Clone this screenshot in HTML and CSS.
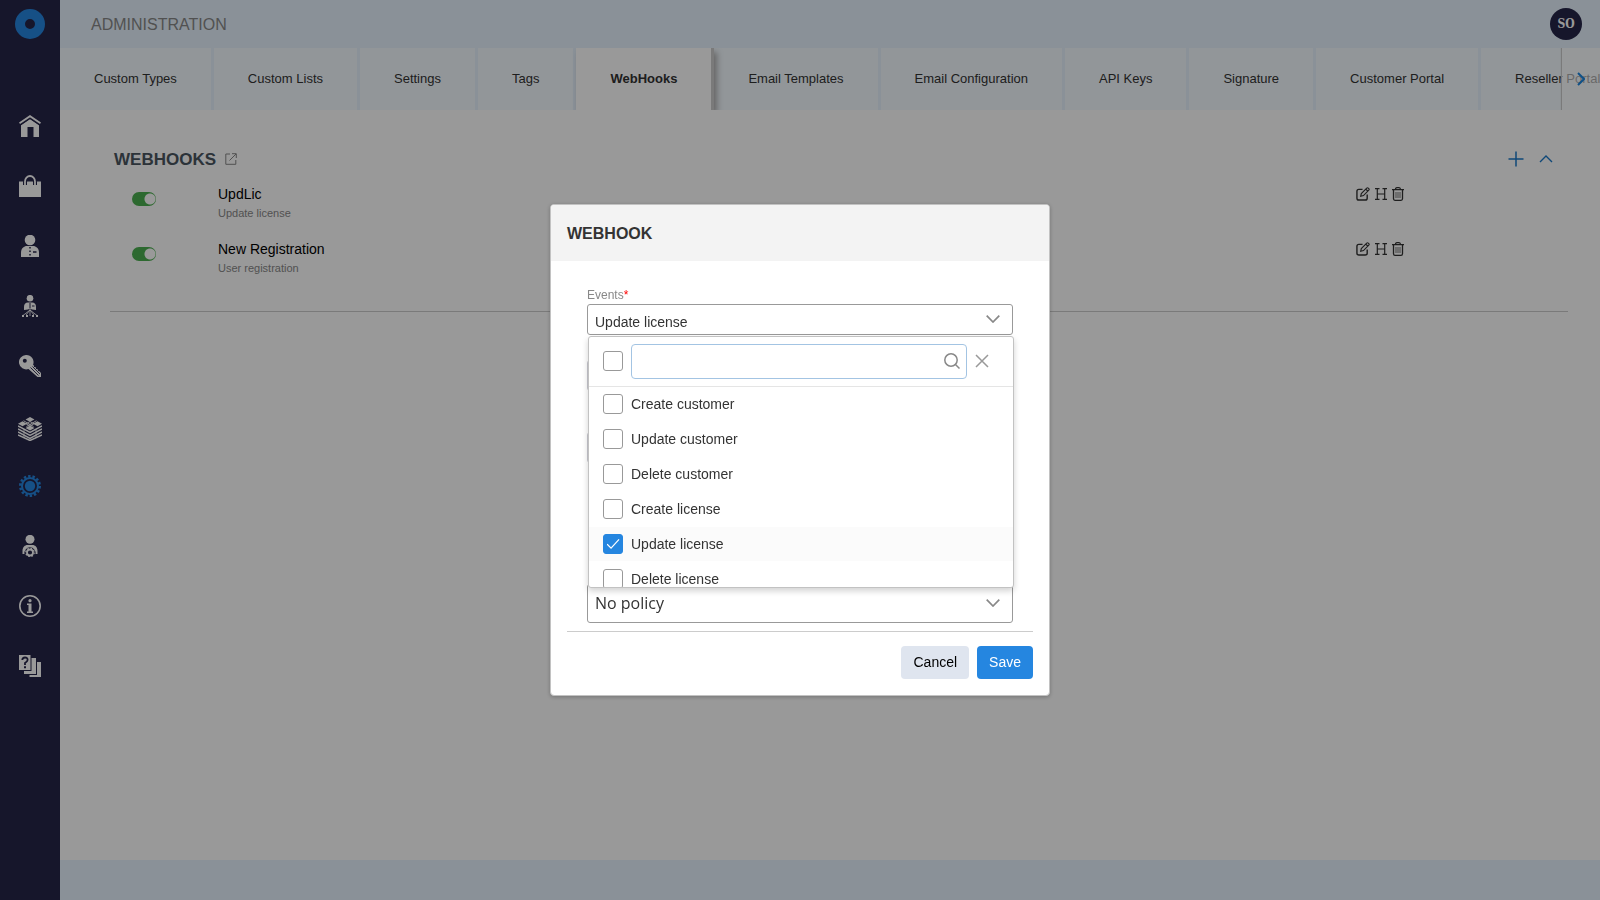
FILE: index.html
```html
<!DOCTYPE html>
<html lang="en">
<head>
<meta charset="utf-8">
<title>Administration</title>
<link rel="stylesheet" href="styles.css">
</head>
<body>
<div class="app">
  <aside class="sidebar">
    <a class="brand" href="#" aria-label="Start">
      <svg width="30" height="30" viewBox="0 0 30 30"><circle cx="15" cy="15" r="10" fill="none" stroke="#2586e0" stroke-width="10"/></svg>
    </a>
    <nav class="menu">
      <a href="#" aria-label="Home"><svg viewBox="0 0 22 22"><path d="M2 10 11 4l9 6v12h-5.500V12h-6v10H2z" fill="currentColor"/><path d="M.5 8.800 11 1.500l10.500 7.300" fill="none" stroke="#262549" stroke-width="4"/><path d="M.5 8.300 11 1.200l10.500 7.100" fill="none" stroke="currentColor" stroke-width="1.800"/></svg></a>
      <a href="#" aria-label="Products"><svg viewBox="0 0 22 22"><path d="M0 6.500h22V22H0z" fill="currentColor"/><path d="M6 10V7a5 5.500 0 0 1 10 0v3" fill="none" stroke="#262549" stroke-width="4"/><path d="M6 10V6.500a5 5.500 0 0 1 10 0V10" fill="none" stroke="currentColor" stroke-width="1.800"/></svg></a>
      <a href="#" aria-label="Customers"><svg viewBox="0 0 22 22"><circle cx="11" cy="5" r="5.300" fill="currentColor"/><path d="M2 22v-4c0-5 3-7 6-7h6c3 0 6 2 6 7v4z" fill="currentColor"/><path d="M11 12v10" stroke="#262549" stroke-width="1.500" stroke-dasharray="1.500 2"/><path d="M14 17h3.500" stroke="#262549" stroke-width="1.500"/></svg></a>
      <a href="#" aria-label="Resellers"><svg viewBox="0 0 22 22"><circle cx="11" cy="3.200" r="3.300" fill="currentColor"/><path d="M5 15v-3q0-4.500 4-4.500h4q4 0 4 4.500v3l-4-.5-2-1-2 1z" fill="currentColor"/><path d="M11 8v5M13 11h2.500" stroke="#262549"/><path d="M11 14v7M11 15l-4 5M11 15l4 5M11 15l-7 5.500M11 15l7 5.500" stroke="currentColor" stroke-width=".8"/><path d="M3 20h2v2H3zM7 20h2v2H7zM13 20h2v2h-2zM17 20h2v2h-2z" fill="currentColor"/></svg></a>
      <a href="#" aria-label="Licenses"><svg viewBox="0 0 22 22"><path fill="currentColor" fill-rule="evenodd" d="M7.300 0a7.200 7.200 0 0 1 6.800 9.700L22 18v4h-3.500l-9-8A7.200 7.200 0 1 1 7.300 0zM5.800 3.800a2 2 0 1 0 0 4 2 2 0 0 0 0-4z"/><path d="m11.500 12.500 8 8M13.500 11.500l7.500 7.500" stroke="#262549" stroke-width=".9"/><path d="m16 11-1 1m3 1-1 1m3 1-1 1" stroke="#262549"/></svg></a>
      <a href="#" aria-label="Bundles" class="low"><svg class="wide" viewBox="0 0 24 24"><path d="m12 0 4.500 2.400L12 4.800 7.500 2.400zM4.500 4.200 9 6.800 4.500 9.300 0 6.800zM19.500 4.200 24 6.800l-4.500 2.500L15 6.800zM12 8.500l4.500 2.500-4.500 2.500L7.500 11z" fill="currentColor"/><path d="m5.500 3.700 10 5.800M18.500 3.700l-10 5.800M8 6.800l4-2.300 4 2.300-4 2.300z" fill="none" stroke="currentColor" stroke-width=".9"/><path d="m0 9 12 6.300L24 9M0 12l12 6.300L24 12M0 15l12 6.300L24 15M0 18l12 5.500L24 18" fill="none" stroke="currentColor" stroke-width="1.500"/><path d="M6 12v9M18 12v9" stroke="currentColor" stroke-width="1.200" opacity=".6"/></svg></a>
      <a href="#" aria-label="Administration" class="current"><svg viewBox="0 0 22 22"><circle cx="11" cy="11" r="9.700" fill="none" stroke="currentColor" stroke-width="2.600" stroke-dasharray="2.400 1.953"/><circle cx="11" cy="11" r="8" fill="none" stroke="currentColor" stroke-width="2"/><circle cx="11" cy="11" r="5.200" fill="currentColor"/></svg></a>
      <a href="#" aria-label="Users"><svg viewBox="0 0 22 22"><circle cx="11" cy="4.300" r="4.500" fill="currentColor"/><path d="M3.500 19v-3c0-4 2.500-6 5-6h5c2.500 0 5 2 5 6v3h-2a5.600 5.600 0 1 0-11 0z" fill="currentColor"/><circle cx="11" cy="17.500" r="3" fill="none" stroke="currentColor" stroke-width="1.800"/><circle cx="11" cy="17.500" r="4.200" fill="none" stroke="currentColor" stroke-width="1.200" stroke-dasharray="1.600 1.700"/></svg></a>
      <a href="#" aria-label="Info"><svg viewBox="0 0 22 22"><circle cx="11" cy="11" r="10.200" fill="none" stroke="currentColor" stroke-width="1.600"/><circle cx="11" cy="5.700" r="1.600" fill="currentColor"/><path d="M8 8.500h4.500v8H14V18H8v-1.500h1.500V10H8z" fill="currentColor"/></svg></a>
      <a href="#" aria-label="Help"><svg viewBox="0 0 22 22"><path d="M0 0h11.500v15H0zM12.500 3H17v16H5v-3h7.500zM18 7h4v15H10.500v-2H18z" fill="currentColor"/><path d="M3.300 5q0-2.500 2.700-2.500T8.600 5Q8.600 6.300 6 8v2" fill="none" stroke="#262549" stroke-width="1.800"/><path d="M5 11.300h2v2H5z" fill="#262549"/></svg></a>
    </nav>
  </aside>

  <div class="page">
    <header class="topbar">
      <h1>ADMINISTRATION</h1>
      <button class="avatar" type="button">SO</button>
    </header>
    <div class="tabs-wrap">
      <nav class="tabs">
        <a href="#">Custom Types</a>
        <a href="#">Custom Lists</a>
        <a href="#">Settings</a>
        <a href="#">Tags</a>
        <a href="#" class="active">WebHooks</a>
        <a href="#">Email Templates</a>
        <a href="#">Email Configuration</a>
        <a href="#">API Keys</a>
        <a href="#">Signature</a>
        <a href="#">Customer Portal</a>
        <a href="#">Reseller Portal</a>
      </nav>
      <button class="tabs-next" type="button" aria-label="Next tabs"><svg width="8" height="14" viewBox="0 0 8 14"><path d="m1 1 6 6-6 6" fill="none" stroke="currentColor" stroke-width="2"/></svg></button>
    </div>
    <main class="content">
      <section class="panel">
        <div class="panel-head">
          <h2>WEBHOOKS</h2>
          <a href="#" class="ext" aria-label="Open documentation"><svg width="12" height="12" viewBox="0 0 12 12"><path d="M5 1H.8v10.300h10V7M7 .7h4.300V5M11 1 4.500 7.500" fill="none" stroke="currentColor"/></svg></a>
          <div class="head-actions">
            <button type="button" aria-label="Add"><svg width="16" height="16" viewBox="0 0 16 16"><path d="M8 .5v15M.5 8h15" stroke="currentColor" stroke-width="1.500"/></svg></button>
            <button type="button" aria-label="Collapse"><svg width="14" height="8" viewBox="0 0 14 8"><path d="m1 7 6-6 6 6" fill="none" stroke="currentColor" stroke-width="1.400"/></svg></button>
          </div>
        </div>
        <div class="hook">
          <input class="switch" type="checkbox" checked aria-label="UpdLic">
          <div class="hook-text"><h3>UpdLic</h3><p>Update license</p></div>
          <div class="hook-actions">
            <button type="button" aria-label="Edit"><svg width="14" height="14" viewBox="0 0 15 15"><path d="M7 2.500H3Q1 2.500 1 4.500V12q0 2 2 2h7q2 0 2-2V8" fill="none" stroke="currentColor" stroke-width="1.500"/><path d="m5 10 .7-3L11.500 1.200q.8-.8 1.600 0l.6.6q.8.800 0 1.600L8 9.200zM10.500 2.300l2 2" fill="none" stroke="currentColor" stroke-width="1.200"/></svg></button>
            <button type="button" aria-label="History"><svg width="12" height="12" viewBox="0 0 12 12"><path d="M0 .6h4.500M7.500.6H12M0 11.400h4.500M7.500 11.400H12M2.300.6v10.800M9.700.6v10.800M2.300 6h7.400" fill="none" stroke="currentColor" stroke-width="1.200"/></svg></button>
            <button type="button" aria-label="Delete"><svg width="12" height="14" viewBox="0 0 12 14"><path d="M0 2.700h12M3.500 2.700Q3.500.7 5 .7h2q1.500 0 1.500 2M1.500 3v8.800q0 1.500 1.500 1.500h6q1.500 0 1.500-1.500V3" fill="none" stroke="currentColor" stroke-width="1.300"/><path d="M4 5v6M6 5v6M8 5v6" stroke="currentColor" stroke-width=".7"/></svg></button>
          </div>
        </div>
        <div class="hook">
          <input class="switch" type="checkbox" checked aria-label="New Registration">
          <div class="hook-text"><h3>New Registration</h3><p>User registration</p></div>
          <div class="hook-actions">
            <button type="button" aria-label="Edit"><svg width="14" height="14" viewBox="0 0 15 15"><path d="M7 2.500H3Q1 2.500 1 4.500V12q0 2 2 2h7q2 0 2-2V8" fill="none" stroke="currentColor" stroke-width="1.500"/><path d="m5 10 .7-3L11.500 1.200q.8-.8 1.600 0l.6.6q.8.800 0 1.600L8 9.200zM10.500 2.300l2 2" fill="none" stroke="currentColor" stroke-width="1.200"/></svg></button>
            <button type="button" aria-label="History"><svg width="12" height="12" viewBox="0 0 12 12"><path d="M0 .6h4.500M7.500.6H12M0 11.400h4.500M7.500 11.400H12M2.300.6v10.800M9.700.6v10.800M2.300 6h7.400" fill="none" stroke="currentColor" stroke-width="1.200"/></svg></button>
            <button type="button" aria-label="Delete"><svg width="12" height="14" viewBox="0 0 12 14"><path d="M0 2.700h12M3.500 2.700Q3.500.7 5 .7h2q1.500 0 1.500 2M1.500 3v8.800q0 1.500 1.500 1.500h6q1.500 0 1.500-1.500V3" fill="none" stroke="currentColor" stroke-width="1.300"/><path d="M4 5v6M6 5v6M8 5v6" stroke="currentColor" stroke-width=".7"/></svg></button>
          </div>
        </div>
      </section>
    </main>
    <footer class="footer"></footer>
  </div>
</div>

<div class="backdrop">
  <form class="modal" role="dialog" aria-labelledby="dlg-title">
    <h2 class="modal-title" id="dlg-title">WEBHOOK</h2>
    <div class="modal-body">
      <div class="events">
        <label class="label" for="events">Events<span class="req">*</span></label>
        <button class="combo" id="events" type="button" aria-haspopup="listbox" aria-expanded="true">
          <span>Update license</span>
          <svg width="14" height="8" viewBox="0 0 14 8"><path d="m.7.7 6.300 6.300L13.300.7" fill="none" stroke="#888" stroke-width="1.700"/></svg>
        </button>
        <div class="dropdown">
          <div class="filter">
            <input class="check" type="checkbox" aria-label="Select all">
            <div class="search">
              <input type="text" aria-label="Filter events">
              <svg width="16" height="16" viewBox="0 0 16 16"><circle cx="7" cy="7" r="6.200" fill="none" stroke="#888" stroke-width="1.500"/><path d="m11.500 11.500 4 4" stroke="#888" stroke-width="1.500"/></svg>
            </div>
            <button class="close" type="button" aria-label="Close"><svg width="14" height="14" viewBox="0 0 14 14"><path d="m1 1 12 12M13 1 1 13" stroke="#999" stroke-width="1.500"/></svg></button>
          </div>
          <div class="options">
            <label><input class="check" type="checkbox">Create customer</label>
            <label><input class="check" type="checkbox">Update customer</label>
            <label><input class="check" type="checkbox">Delete customer</label>
            <label><input class="check" type="checkbox">Create license</label>
            <label class="picked"><input class="check" type="checkbox" checked>Update license</label>
            <label><input class="check" type="checkbox">Delete license</label>
          </div>
        </div>
      </div>
      <input class="field field-name" type="text" aria-label="Name">
      <input class="field field-url" type="text" aria-label="URL">
      <div class="policy">
        <select aria-label="Policy"><option>No policy</option></select>
        <svg width="14" height="8" viewBox="0 0 14 8"><path d="m.7.7 6.300 6.300L13.300.7" fill="none" stroke="#888" stroke-width="1.700"/></svg>
      </div>
    </div>
    <div class="modal-foot">
      <button class="btn cancel" type="button">Cancel</button>
      <button class="btn save" type="submit">Save</button>
    </div>
  </form>
</div>
</body>
</html>
```

FILE: styles.css
```css
* { box-sizing: border-box; }
body { margin: 0; font-family: "Liberation Sans", Arial, sans-serif; font-size: 14px; color: #333; }
h1, h2, h3, p { margin: 0; font-weight: normal; }
a { color: inherit; text-decoration: none; }
button { border: 0; padding: 0; background: none; font: inherit; color: inherit; cursor: pointer; }
svg { display: block; }

.app { display: flex; min-height: 100vh; }
.sidebar { flex: 0 0 60px; background: #262549; color: #fff; }
.brand { display: flex; justify-content: center; padding-top: 9px; }
.menu { display: flex; flex-direction: column; padding-top: 57px; }
.menu a { display: flex; align-items: center; justify-content: center; height: 60px; }
.menu svg { width: 22px; height: 22px; }
.menu .wide { width: 24px; height: 24px; }
.menu .low { padding-top: 6px; }
.menu .current { color: #2586e0; }

.page { flex: 1; min-width: 0; display: flex; flex-direction: column; }
.topbar { display: flex; align-items: center; justify-content: space-between; height: 48px; padding: 0 18px 0 31px; background: #e6f2fd; }
.topbar h1 { padding-top: 2px; font-size: 16px; color: #888; }
.avatar { width: 32px; height: 32px; border-radius: 50%; background: #262549; color: #fff; font: bold 12px "DejaVu Serif Condensed", "DejaVu Serif", serif; }

.tabs-wrap { position: relative; }
.tabs { display: flex; height: 62px; overflow: hidden; background: #f3faff; }
.tabs a { flex: none; display: flex; align-items: center; padding: 0 34px 2px; border-right: 3px solid #e6f2fd; font-size: 13px; white-space: nowrap; }
.tabs .active { background: #fff; font-weight: bold; border-color: #ccc; box-shadow: 3px 4px 6px #aaa; }
.tabs-next { position: absolute; top: 0; right: 0; display: flex; align-items: center; justify-content: center; width: 38px; height: 62px; background: rgba(255, 255, 255, .6); box-shadow: -1px 0 1px #ccc; clip-path: inset(0 0 0 -4px); color: #1a86e0; }

.content { flex: 1; padding: 35px 32px 35px 50px; background: #fff; }
.panel { padding-bottom: 28px; border-bottom: 1px solid #ccc; }
.panel-head { display: flex; align-items: center; gap: 9px; height: 28px; padding: 0 15px 0 4px; }
.panel-head h2 { padding-top: 2px; font-size: 17px; font-weight: bold; color: #4a5560; }
.ext { color: #888; }
.head-actions { display: flex; align-items: center; gap: 15px; margin-left: auto; color: #1a78c8; }
.hook { display: flex; align-items: flex-start; height: 55px; padding: 13px 164px 0 22px; }
.switch { appearance: none; width: 24px; height: 14px; margin: 6px 62px 0 0; border-radius: 7px; background: radial-gradient(circle at 18px 7px, #fff 5px, #4caf50 6px); }
.hook-text { flex: 1; }
.hook h3 { font-size: 14px; line-height: 16px; color: #000; }
.hook p { margin-top: 4px; font-size: 11px; line-height: 14px; color: #888; }
.hook-actions { display: flex; align-items: center; gap: 5px; height: 16px; }
.footer { height: 40px; background: #e6f2fd; }

.backdrop { position: fixed; inset: 0; display: flex; align-items: center; justify-content: center; background: rgba(0, 0, 0, .4); }
.modal { width: 500px; border: 1px solid #c2c2c2; border-radius: 4px; background: #fff; box-shadow: 0 1px 4px rgba(0, 0, 0, .25); }
.modal-title { height: 56px; padding: 1px 16px 0; border-radius: 3px 3px 0 0; background: #f3f3f3; font-size: 16px; font-weight: bold; line-height: 56px; }
.modal-body { display: flex; flex-direction: column; padding: 26px 36px 8px; }
.events { position: relative; }
.label { display: block; font-size: 12px; line-height: 17px; color: #888; }
.req { color: #f00; }
.combo { display: flex; align-items: center; justify-content: space-between; width: 100%; height: 31px; padding: 4px 12px 0 7px; border: 1px solid #999; border-radius: 3px; }
.combo svg { margin-bottom: 6px; }
.dropdown { position: absolute; top: 49px; left: 1px; z-index: 1; width: 100%; border: 1px solid #c2c2c2; border-radius: 3px; background: #fff; box-shadow: 0 3px 6px rgba(0, 0, 0, .18); }
.filter { display: flex; align-items: center; gap: 8px; height: 50px; padding: 0 24px 1px 14px; border-bottom: 1px solid #e5e5e5; }
.search { flex: 1; position: relative; }
.search input { display: block; width: 100%; height: 35px; padding: 0 28px 0 8px; border: 1px solid #a3c4e3; border-radius: 4px; outline: 0; font: inherit; }
.search svg { position: absolute; right: 7px; top: 9px; }
.options { display: flex; flex-direction: column; gap: 1px; height: 200px; overflow: hidden; }
.options label { flex: none; display: flex; align-items: center; gap: 8px; height: 34px; padding: 0 14px; }
.options .picked { background: #fbfbfb; }
.check { appearance: none; flex: none; width: 20px; height: 20px; margin: 0; border: 1px solid #999; border-radius: 3px; background: #fff; }
.check:checked { display: grid; place-items: center; border-color: #2586e0; background: #2586e0; }
.check:checked::before { content: ""; width: 13px; height: 10px; background: #fff; clip-path: polygon(0 55%, 8% 47%, 35% 83%, 93% 0, 100% 8%, 35% 100%); }
.field { width: 100%; height: 31px; border: 1px solid #c8c8d0; border-radius: 3px; }
.field-name { margin-top: 25px; }
.field-url { margin-top: 41px; }
.policy { position: relative; margin-top: 121px; }
.policy select { appearance: none; display: block; width: 100%; height: 39px; padding: 0 30px 2px 7px; border: 1px solid #999; border-radius: 3px; background: #fff; color: #333; font: 16px "Open Sans", sans-serif; }
.policy svg { position: absolute; right: 13px; top: 15px; }
.modal-foot { display: flex; justify-content: flex-end; gap: 8px; margin: 0 16px; padding: 14px 0 16px; border-top: 1px solid #ccc; }
.btn { height: 33px; padding: 0 12px 2px; border-radius: 4px; }
.cancel { background: #dfe5ef; color: #000; }
.save { background: #2586e0; color: #fff; }
```
